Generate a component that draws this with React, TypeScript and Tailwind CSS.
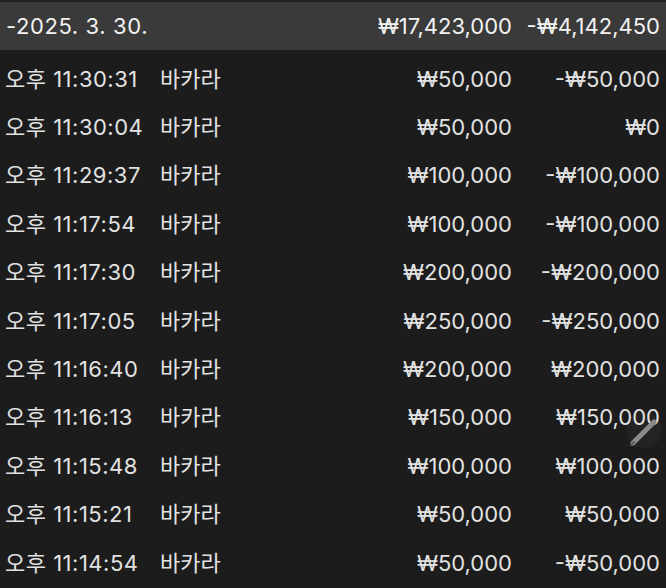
import React from 'react';

interface Row {
  time: string;
  game: string;
  bet: string;
  result: string;
}

const rows: Row[] = [
  { time: '오후 11:30:31', game: '바카라', bet: '₩50,000', result: '-₩50,000' },
  { time: '오후 11:30:04', game: '바카라', bet: '₩50,000', result: '₩0' },
  { time: '오후 11:29:37', game: '바카라', bet: '₩100,000', result: '-₩100,000' },
  { time: '오후 11:17:54', game: '바카라', bet: '₩100,000', result: '-₩100,000' },
  { time: '오후 11:17:30', game: '바카라', bet: '₩200,000', result: '-₩200,000' },
  { time: '오후 11:17:05', game: '바카라', bet: '₩250,000', result: '-₩250,000' },
  { time: '오후 11:16:40', game: '바카라', bet: '₩200,000', result: '₩200,000' },
  { time: '오후 11:16:13', game: '바카라', bet: '₩150,000', result: '₩150,000' },
  { time: '오후 11:15:48', game: '바카라', bet: '₩100,000', result: '₩100,000' },
  { time: '오후 11:15:21', game: '바카라', bet: '₩50,000', result: '₩50,000' },
  { time: '오후 11:14:54', game: '바카라', bet: '₩50,000', result: '-₩50,000' },
];

const App: React.FC = () => {
  return (
    <div
      className="relative w-[666px] h-[588px] overflow-hidden bg-[#1c1c1c] text-[22px] text-[#e2e2e2]"
      style={{ fontFamily: 'Inter, "Noto Sans CJK KR", sans-serif' }}
    >
      {/* Date header */}
      <div className="flex items-center h-[50px] border-t-2 border-[#232323] bg-[#3a3a3a] text-[#f2f2f2]">
        <div className="pl-[6px] flex-1 tracking-[0.6px]">-2025. 3. 30.</div>
        <div className="w-[200px] text-right">₩17,423,000</div>
        <div className="w-[154px] text-right pr-[6px]">-₩4,142,450</div>
      </div>

      {/* Entries */}
      <div className="pt-[5px]">
        {rows.map((r, i) => (
          <div key={i} className="flex items-center h-[48.4px]">
            <div className="pl-[5px] w-[160px] tracking-[0.5px] whitespace-nowrap">{r.time}</div>
            <div className="flex-1">{r.game}</div>
            <div className="w-[200px] text-right">{r.bet}</div>
            <div className="w-[154px] text-right pr-[6px]">{r.result}</div>
          </div>
        ))}
      </div>

      {/* Pencil overlay */}
      <svg
        className="absolute left-[624px] top-[412px]"
        width="40"
        height="40"
        viewBox="0 0 40 40"
      >
        <circle cx="20" cy="18" r="18" fill="#ffffff" opacity="0.03" />
        <path d="M9 31 L30 10" stroke="#8a8a8a" strokeWidth="5" strokeLinecap="round" />
        <path d="M7 33 L10 30" stroke="#5a5a5a" strokeWidth="2" strokeLinecap="round" />
      </svg>
    </div>
  );
};

export default App;
